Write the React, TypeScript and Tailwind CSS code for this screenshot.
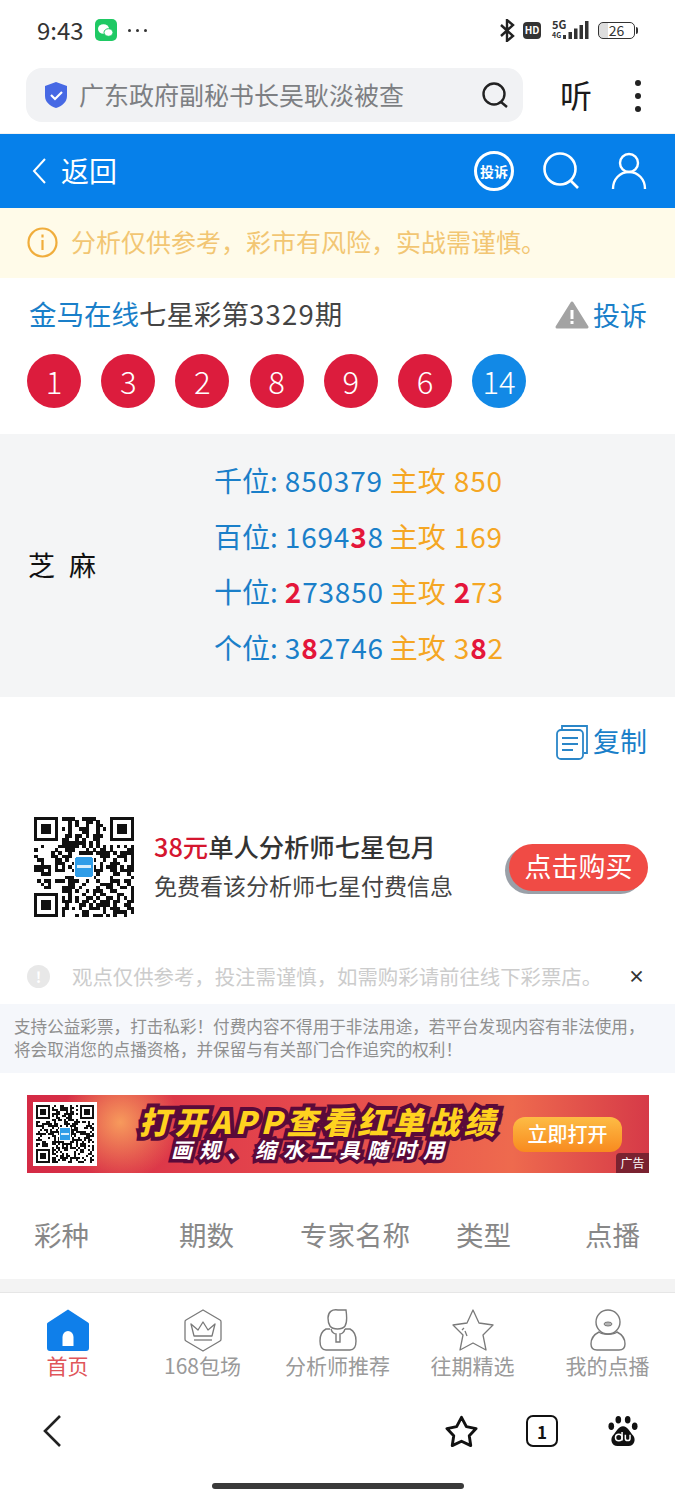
import React from "react";

const FONT = '"Noto Sans CJK SC", "Noto Sans", sans-serif';

function QR({ size, seed = 7 }: { size: number; seed?: number }) {
  const n = 29;
  const cells: React.ReactNode[] = [];
  let s = seed;
  const rnd = () => {
    s = (s * 1103515245 + 12345) & 0x7fffffff;
    return (s >> 16) & 1;
  };
  const inFinder = (x: number, y: number) =>
    (x < 8 && y < 8) || (x > n - 9 && y < 8) || (x < 8 && y > n - 9);
  for (let y = 0; y < n; y++) {
    for (let x = 0; x < n; x++) {
      const v = rnd();
      if (!inFinder(x, y) && v) cells.push(<rect key={`${x}-${y}`} x={x} y={y} width={1.02} height={1.02} fill="#111" />);
    }
  }
  const finder = (x: number, y: number) => (
    <g key={`f${x}${y}`}>
      <rect x={x} y={y} width={7} height={7} fill="#111" />
      <rect x={x + 1} y={y + 1} width={5} height={5} fill="#fff" />
      <rect x={x + 2} y={y + 2} width={3} height={3} fill="#111" />
    </g>
  );
  return (
    <svg width={size} height={size} viewBox="0 0 29 29" shapeRendering="crispEdges">
      {cells}
      {finder(0, 0)}
      {finder(22, 0)}
      {finder(0, 22)}
      <rect x={11.5} y={11} width={6} height={7} fill="#fff" />
      <rect x={12} y={11.5} width={5} height={6} rx={0.6} fill="#2f9de8" />
      <rect x={12.6} y={14} width={3.8} height={0.9} fill="#d8eefc" />
    </svg>
  );
}

function Ball({ n, blue }: { n: number; blue?: boolean }) {
  return (
    <div className={`w-[54px] h-[54px] rounded-full flex items-center justify-center text-white text-[31px] font-light ${blue ? "bg-[#1289e6]" : "bg-[#dc1c3d]"}`}>
      {n}
    </div>
  );
}

function R({ children }: { children: React.ReactNode }) {
  return <span className="text-[#e4163a] font-bold">{children}</span>;
}

function PredRow({ label, nums, main }: { label: string; nums: React.ReactNode; main: React.ReactNode }) {
  return (
    <div className="flex items-center h-[55.6px] text-[28px] leading-none whitespace-nowrap">
      <span className="text-[#1a7fc9]">{label}:</span>
      <span className="text-[#1a7fc9] ml-[7px] w-[105px] tracking-[0.8px]">{nums}</span>
      <span className="text-[#f5a623]">主攻</span>
      <span className="text-[#f5a623] ml-[8px] tracking-[0.8px]">{main}</span>
    </div>
  );
}

function TabItem({ icon, label, active }: { icon: React.ReactNode; label: string; active?: boolean }) {
  return (
    <div className="flex flex-col items-center w-[135px]">
      <div className="h-[44px] flex items-center justify-center">{icon}</div>
      <span className={`text-[21px] leading-[26px] whitespace-nowrap ${active ? "text-[#e0555a]" : "text-[#9a9a9a]"}`}>{label}</span>
    </div>
  );
}

export default function App() {
  return (
    <div className="w-[675px] h-[1500px] bg-white flex flex-col overflow-hidden" style={{ fontFamily: FONT }}>
      {/* status bar */}
      <div className="h-[60px] flex items-center justify-between pl-[37px] pr-[37px] shrink-0">
        <div className="flex items-center">
          <span className="text-[24px] text-[#333] leading-none">9:43</span>
          <div className="ml-[11px] w-[22px] h-[22px] rounded-[5px] bg-[#1fc964] flex items-center justify-center">
            <svg width="17" height="15" viewBox="0 0 17 15">
              <ellipse cx="6.5" cy="6" rx="5.5" ry="4.8" fill="#fff" />
              <ellipse cx="11.5" cy="9.5" rx="4.5" ry="3.8" fill="#fff" stroke="#1fc964" strokeWidth="1" />
            </svg>
          </div>
          <div className="ml-[11px] flex gap-[5px]">
            <div className="w-[3px] h-[3px] rounded-full bg-[#333]" />
            <div className="w-[3px] h-[3px] rounded-full bg-[#333]" />
            <div className="w-[3px] h-[3px] rounded-full bg-[#333]" />
          </div>
        </div>
        <div className="flex items-center">
          <svg width="16" height="23" viewBox="0 0 16 23" fill="none" stroke="#222" strokeWidth="2.4">
            <path d="M2 6l12 11-6 5V1l6 5L2 17" />
          </svg>
          <div className="ml-[8px] w-[18px] h-[17px] rounded-[4px] bg-[#333] text-white text-[10px] font-bold flex items-center justify-center leading-none">HD</div>
          <div className="ml-[10px] w-[38px] h-[20px] relative">
            <span className="absolute left-[1px] top-[-3px] text-[11px] font-bold leading-[14px] text-[#333]">5G</span>
            <span className="absolute left-[1px] top-[11px] text-[7px] font-bold leading-[9px] text-[#333]">4G</span>
            <svg className="absolute left-[12px] top-0" width="26" height="20" viewBox="0 0 26 20" fill="#333">
              <rect x="0" y="15" width="3" height="4" />
              <rect x="5.5" y="12" width="3.5" height="7" />
              <rect x="11" y="8.5" width="3.5" height="10.5" />
              <rect x="16.5" y="5" width="3.5" height="14" />
              <rect x="22" y="1" width="3.5" height="18" />
            </svg>
          </div>
          <div className="ml-[9px] w-[37px] h-[17px] rounded-[5px] border-[1.5px] border-[#333] flex items-center justify-center text-[14px] text-[#333] leading-none bg-[linear-gradient(90deg,#ddd_0,#ddd_26%,#fff_26%)]">
            26
          </div>
          <div className="w-[2px] h-[7px] bg-[#333] ml-[1px] rounded-r" />
        </div>
      </div>

      {/* address bar */}
      <div className="h-[74px] shrink-0 flex items-start pl-[26px] pt-[8px] border-b border-[#f2f2f2]">
        <div className="w-[497px] h-[54px] bg-[#f1f2f4] rounded-[16px] flex items-center pl-[18px]">
          <svg width="24" height="32" viewBox="0 0 24 32">
            <path d="M12 3l11 4v10c0 6-5 10-11 12C6 27 1 23 1 17V7z" fill="#4769e4" />
            <path d="M7 16l4 4 7-7" stroke="#fff" strokeWidth="2.2" fill="none" />
          </svg>
          <span className="ml-[11px] text-[25px] text-[#7d7f83] leading-none whitespace-nowrap w-[375px] pb-[2px]">广东政府副秘书长吴耿淡被查</span>
          <svg className="ml-[27px]" width="28" height="28" viewBox="0 0 28 28" fill="none" stroke="#222" strokeWidth="2.4">
            <circle cx="13" cy="13" r="10.5" />
            <path d="M20 21l6 5" />
          </svg>
        </div>
        <span className="ml-[37px] mt-[7px] text-[32px] leading-[38px] text-[#1a1a1a]">听</span>
        <div className="ml-[43px] mt-[12px] flex flex-col gap-[7px]">
          <div className="w-[6px] h-[6px] rounded-full bg-[#222]" />
          <div className="w-[6px] h-[6px] rounded-full bg-[#222]" />
          <div className="w-[6px] h-[6px] rounded-full bg-[#222]" />
        </div>
      </div>

      {/* blue header */}
      <div className="h-[74px] shrink-0 bg-[#0680ea] flex items-center pl-[31px] pr-[28px] text-white">
        <svg width="16" height="28" viewBox="0 0 16 28" fill="none" stroke="#fff" strokeWidth="2">
          <path d="M14 2L3 14l11 12" />
        </svg>
        <span className="ml-[14px] text-[28px] leading-none pb-[2px]">返回</span>
        <div className="ml-auto w-[40px] h-[40px] rounded-full border-[3px] border-white flex items-center justify-center text-[14px] font-bold leading-none whitespace-nowrap">投诉</div>
        <svg className="ml-[28px]" width="40" height="40" viewBox="0 0 40 40" fill="none" stroke="#fff" strokeWidth="2.6">
          <circle cx="18" cy="18" r="15.5" />
          <path d="M29 30l7 7" />
        </svg>
        <svg className="ml-[29px]" width="36" height="38" viewBox="0 0 36 38" fill="none" stroke="#fff" strokeWidth="2.4">
          <circle cx="18" cy="11" r="9" />
          <path d="M2 37c0-10 7-17 16-17s16 7 16 17" />
        </svg>
      </div>

      {/* notice */}
      <div className="h-[70px] shrink-0 bg-[#fffbe9] flex items-center pl-[27px]">
        <svg width="31" height="31" viewBox="0 0 31 31" fill="none" stroke="#f0ad3c" strokeWidth="2.2" className="mb-[2px]">
          <circle cx="15.5" cy="15.5" r="14" />
          <path d="M15.5 13v10" />
          <path d="M15.5 7.5v3" />
        </svg>
        <span className="ml-[13px] text-[25px] leading-none text-[#f2c673] whitespace-nowrap pb-[4px]">分析仅供参考，彩市有风险，实战需谨慎。</span>
      </div>

      {/* title */}
      <div className="h-[76px] shrink-0 flex items-center justify-between pl-[29px] pr-[28px]">
        <div className="text-[27.5px] leading-none whitespace-nowrap pb-[4px]">
          <span className="text-[#1a7fc9]">金马在线</span>
          <span className="text-[#444]">七星彩第</span>
          <span className="text-[#444] tracking-[1.2px]">3329</span>
          <span className="text-[#444]">期</span>
        </div>
        <div className="flex items-center">
          <svg width="34" height="28" viewBox="0 0 34 28" className="mb-[2px]">
            <path d="M17 2L32 26H2z" fill="#a3a3a3" stroke="#a3a3a3" strokeWidth="3" strokeLinejoin="round" />
            <rect x="15.5" y="9" width="3" height="9" fill="#fff" />
            <rect x="15.5" y="20" width="3" height="3" fill="#fff" />
          </svg>
          <span className="ml-[4px] text-[27px] leading-none text-[#1a7fc9] pb-[4px]">投诉</span>
        </div>
      </div>

      {/* balls */}
      <div className="shrink-0 flex gap-[20.2px] pl-[27px]">
        {[1, 3, 2, 8, 9, 6].map((n, i) => (
          <Ball key={i} n={n} />
        ))}
        <Ball n={14} blue />
      </div>

      {/* predictions */}
      <div className="mt-[26px] h-[263px] shrink-0 bg-[#f4f5f6] flex items-center pl-[28px]">
        <div className="w-[186px] flex text-[27px] text-[#111] leading-none pb-[3px]">
          <span>芝</span>
          <span className="ml-[14px]">麻</span>
        </div>
        <div className="flex flex-col mt-[-4px]">
          <PredRow label="千位" nums="850379" main="850" />
          <PredRow label="百位" nums={<>1694<R>3</R>8</>} main="169" />
          <PredRow label="十位" nums={<><R>2</R>73850</>} main={<><R>2</R>73</>} />
          <PredRow label="个位" nums={<>3<R>8</R>2746</>} main={<>3<R>8</R>2</>} />
        </div>
      </div>

      {/* copy */}
      <div className="h-[90px] shrink-0 flex items-center justify-end pr-[28px]">
        <svg width="32" height="36" viewBox="0 0 32 36" fill="none" stroke="#2a86c8" strokeWidth="1.8">
          <path d="M6 5V2h25v27h-3" />
          <rect x="1" y="6" width="26" height="29" rx="4" />
          <path d="M6 14h16M6 20h16M6 26h11" />
        </svg>
        <span className="ml-[5px] text-[27px] leading-none text-[#1a7fc9] pb-[4px]">复制</span>
      </div>

      {/* promo */}
      <div className="mt-[30px] h-[100px] shrink-0 flex items-center pl-[34px] pr-[27px]">
        <QR size={100} />
        <div className="ml-[20px] flex flex-col pb-[4px]">
          <div className="text-[25.300px] leading-[30px] font-medium text-[#333] whitespace-nowrap">
            <span className="text-[#d5162f]">38元</span>单人分析师七星包月
          </div>
          <div className="mt-[10px] text-[23px] leading-[28px] text-[#444] whitespace-nowrap">免费看该分析师七星付费信息</div>
        </div>
        <div className="ml-auto w-[139px] h-[47px] rounded-full bg-[#f04b45] shadow-[-4px_3px_0_#9aa0a8] flex items-center justify-center text-white text-[27px] leading-none whitespace-nowrap pb-[3px]">点击购买</div>
      </div>

      {/* disclaimer */}
      <div className="mt-[31px] h-[56px] shrink-0 flex items-center pl-[27px] pr-[30px]">
        <div className="w-[23px] h-[23px] rounded-full bg-[#e8e8e8] flex items-center justify-center text-white text-[15px] font-bold leading-none">!</div>
        <span className="ml-[22px] text-[20.4px] leading-none text-[#cccccc] whitespace-nowrap">观点仅供参考，投注需谨慎，如需购彩请前往线下彩票店。</span>
        <span className="ml-auto text-[17px] leading-none text-[#333] font-bold pb-[2px]">×</span>
      </div>

      {/* legal */}
      <div className="h-[69px] shrink-0 bg-[#f5f7fb] pl-[14px] pr-[14px] pt-[11px] text-[16.6px] leading-[23px] text-[#8f8f8f] whitespace-nowrap">
        <div>支持公益彩票，打击私彩！付费内容不得用于非法用途，若平台发现内容有非法使用，</div>
        <div>将会取消您的点播资格，并保留与有关部门合作追究的权利！</div>
      </div>

      {/* banner */}
      <div className="mt-[22px] ml-[27px] w-[622px] h-[78px] shrink-0 relative flex items-center overflow-hidden bg-[radial-gradient(circle_at_15%_35%,#f79a5c_0,transparent_11%),linear-gradient(90deg,#d42a45_0%,#e6484d_45%,#ee6a4e_78%,#d63a48_100%)]">
        <div className="ml-[6px] w-[64px] h-[64px] bg-white flex items-center justify-center shrink-0">
          <QR size={58} seed={23} />
        </div>
        <div className="ml-[32px] flex flex-col items-center w-[380px] shrink-0">
          <div className="italic font-black text-[31px] leading-[31px] tracking-[4.5px] text-[#ffd21f] whitespace-nowrap [-webkit-text-stroke:8px_#5a0a3a] [paint-order:stroke_fill]">打开APP查看红单战绩</div>
          <div className="italic font-bold text-[21px] leading-[27px] tracking-[7px] text-white whitespace-nowrap mr-[16px] [-webkit-text-stroke:7px_#5a0a3a] [paint-order:stroke_fill]">画规、缩水工具随时用</div>
        </div>
        <div className="ml-[4px] w-[109px] h-[35px] rounded-[12px] bg-[linear-gradient(180deg,#fdbc45,#f88a1f)] text-white text-[20px] font-medium flex items-center justify-center leading-none whitespace-nowrap shrink-0">立即打开</div>
        <div className="absolute right-0 bottom-0 w-[33px] h-[20px] bg-[#7a2230] text-white text-[12px] flex items-center justify-center leading-none rounded-tl-[4px]">广告</div>
      </div>

      {/* table head */}
      <div className="mt-[23px] h-[83px] shrink-0 flex items-center text-[27.5px] leading-none text-[#888] whitespace-nowrap pb-[6px]">
        <span className="ml-[34px] w-[145px]">彩种</span>
        <span className="w-[121px]">期数</span>
        <span className="w-[156px]">专家名称</span>
        <span className="w-[129px]">类型</span>
        <span>点播</span>
      </div>
      <div className="h-[14px] shrink-0 bg-[#f3f3f3] border-b border-[#e6e6e6]" />

      {/* tab bar */}
      <div className="h-[103px] shrink-0 flex pt-[15px]">
        <TabItem
          active
          label="首页"
          icon={
            <svg width="44" height="42" viewBox="0 0 44 42">
              <path d="M22 0.500L42 13.500a2 2 0 0 1 1 2v23.500a3 3 0 0 1-3 3H4a3 3 0 0 1-3-3V15.500a2 2 0 0 1 1-2z" fill="#0f7fea" />
              <path d="M16.500 37V28a5.500 6 0 0 1 11 0v9z" fill="#fff" />
            </svg>
          }
        />
        <TabItem
          label="168包场"
          icon={
            <svg width="40" height="43" viewBox="0 0 40 43" fill="none" stroke="#7a7a7a" strokeWidth="1.3" strokeLinejoin="round">
              <path d="M20 1l17 10a2 2 0 0 1 1 2v17a2 2 0 0 1-1 2L20 42 3 32a2 2 0 0 1-1-2V13a2 2 0 0 1 1-2z" />
              <path d="M8 15l7 6 5-8 5 8 7-6-3 12H11z" />
              <path d="M11 31h18" />
            </svg>
          }
        />
        <TabItem
          label="分析师推荐"
          icon={
            <svg width="38" height="42" viewBox="0 0 38 42" fill="none" stroke="#7a7a7a" strokeWidth="1.400">
              <path d="M9 9C9 3 13 0 19 1L27 1C28 8 28 14 26 17C23 21 14 21 11 17C9 14 9 12 9 9z" />
              <path d="M11 20H7C3 22 1 26 1 32C1 38 3 41 7 41H31C35 41 37 38 37 32C37 26 35 22 31 20H26" />
              <path d="M12 20C13 24 16 25 17 25V33h4V25C22 25 25 24 26 20" />
            </svg>
          }
        />
        <TabItem
          label="往期精选"
          icon={
            <svg width="44" height="43" viewBox="0 0 44 43" fill="none" stroke="#7a7a7a" strokeWidth="1.300">
              <path d="M22 1l6 13 14 2-10 10 3 15-13-7-13 7 3-15L2 16l14-2z" strokeLinejoin="round" />
              <path d="M11 21l2-2M14 22l2 5" />
            </svg>
          }
        />
        <TabItem
          label="我的点播"
          icon={
            <svg width="36" height="42" viewBox="0 0 36 42" fill="none" stroke="#7a7a7a" strokeWidth="1.400">
              <circle cx="18" cy="13" r="12" />
              <ellipse cx="18" cy="15" rx="4" ry="2" fill="#b5b5b5" strokeWidth="1" />
              <path d="M9 23C3 26 1 30 1 35C1 39 3 41 7 41H29C33 41 35 39 35 35C35 30 33 26 27 23C24 26 12 26 9 23z" />
            </svg>
          }
        />
      </div>

      {/* browser bar */}
      <div className="h-[75px] shrink-0 flex items-center pl-[42px] pb-[5px]">
        <svg width="20" height="34" viewBox="0 0 20 34" fill="none" stroke="#222" strokeWidth="2.6">
          <path d="M18 2L3 17l15 15" />
        </svg>
        <svg className="ml-[382px]" width="35" height="34" viewBox="0 0 36 34" fill="none" stroke="#111" strokeWidth="3" strokeLinejoin="round">
          <path d="M18 3l5 9.500 10 2-7 7.500 1.500 10-9.500-4.500L8.500 32 10 22 3 14.500l10-2z" />
        </svg>
        <div className="ml-[47px] w-[32px] h-[32px] rounded-[7px] border-[2.5px] border-[#111] flex items-center justify-center text-[17px] font-bold leading-none text-[#111]">1</div>
        <svg className="ml-[50px]" width="30" height="32" viewBox="0 0 32 34">
          <ellipse cx="11" cy="5" rx="3" ry="4" fill="#111" />
          <ellipse cx="21" cy="5" rx="3" ry="4" fill="#111" />
          <ellipse cx="3.500" cy="12" rx="3" ry="4" fill="#111" />
          <ellipse cx="28.500" cy="12" rx="3" ry="4" fill="#111" />
          <path d="M16 12c5 0 7 6 11 10 3 4 1 11-5 11H10c-6 0-8-7-5-11 4-4 6-10 11-10z" fill="#111" />
          <circle cx="11.500" cy="24" r="3.500" fill="none" stroke="#fff" strokeWidth="1.600" />
          <path d="M15 18v9M18.500 21v4c0 3 5 3 5 0v-4" fill="none" stroke="#fff" strokeWidth="1.600" />
        </svg>
      </div>

      {/* home indicator */}
      <div className="flex-1 flex justify-center pt-[12px]">
        <div className="w-[252px] h-[6px] rounded-full bg-[#3a3a3a]" />
      </div>
    </div>
  );
}
